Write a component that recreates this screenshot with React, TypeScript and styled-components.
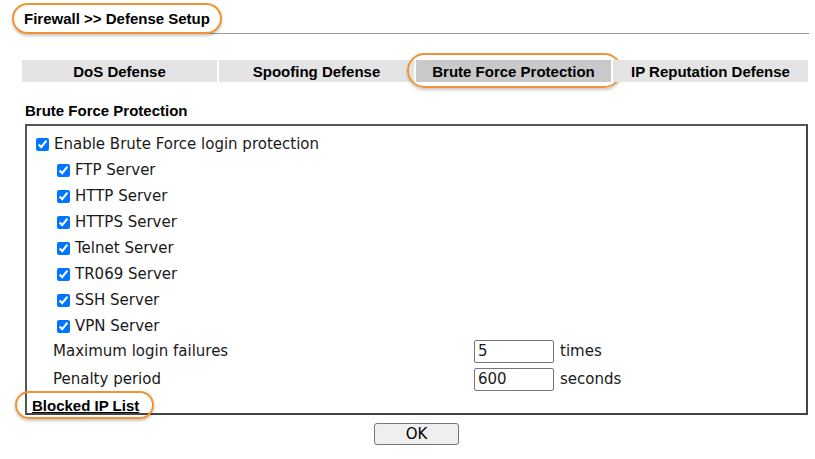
import styled, { createGlobalStyle } from "styled-components";

const GlobalStyle = createGlobalStyle`
  body {
    margin: 0;
    background: #ffffff;
    font-family: "DejaVu Sans", Verdana, sans-serif;
    color: #1a1a1a;
  }
`;

const Page = styled.div`
  width: 815px;
  height: 459px;
  box-sizing: border-box;
  padding: 3px 7px 0 12px;
`;

const Header = styled.div`
  display: flex;
  align-items: flex-end;
`;

const TitleOval = styled.div`
  position: relative;
  z-index: 1;
  height: 31px;
  box-sizing: border-box;
  display: flex;
  align-items: center;
  padding: 0 10px;
  background: #ffffff;
  border: 2px solid #f39234;
  border-radius: 16px;
  box-shadow: 0 2px 3px rgba(0, 0, 0, 0.22);
  font: bold 15px "Liberation Sans", Arial, sans-serif;
  color: #000;
`;

const Rule = styled.div`
  flex: 1;
  margin-left: -14px;
  margin-right: -1px;
  border-bottom: 1px solid #9a9a9a;
`;

const Tabs = styled.div`
  display: grid;
  grid-template-columns: repeat(4, 1fr);
  gap: 2px;
  margin: 26px 0 0 10px;
`;

const Tab = styled.div<{ $active?: boolean }>`
  position: relative;
  height: 22px;
  display: flex;
  align-items: center;
  justify-content: center;
  background: ${(p) => (p.$active ? "#c9c9c9" : "#e4e4e4")};
  font: bold 15px "Liberation Sans", Arial, sans-serif;
  color: #000;
`;

const Annotation = styled.span<{ $inset: string; $radius: number }>`
  position: absolute;
  inset: ${(p) => p.$inset};
  border: 2px solid #f39234;
  border-radius: ${(p) => p.$radius}px;
  box-shadow: 0 2px 3px rgba(0, 0, 0, 0.22);
  pointer-events: none;
`;

const SectionTitle = styled.div`
  margin: 20px 0 0 13px;
  line-height: 18px;
  font: bold 15px "Liberation Sans", Arial, sans-serif;
  color: #000;
`;

const Panel = styled.div`
  margin: 5px 0 0 13px;
  height: 291px;
  box-sizing: border-box;
  border: 2px solid #555555;
  border-right-color: #444;
  border-bottom-color: #444;
  padding-top: 5px;
  font-size: 15px;
`;

const CheckRow = styled.label<{ $indent: number }>`
  display: flex;
  align-items: center;
  gap: 5px;
  height: 26px;
  padding-left: ${(p) => p.$indent}px;
`;

const Check = styled.input`
  margin: 0;
  width: 13px;
  height: 13px;
  accent-color: #0075ff;
`;

const Fields = styled.div`
  margin-top: -2px;
`;

const FieldRow = styled.div`
  display: grid;
  grid-template-columns: 421px 80px auto;
  align-items: center;
  height: 28px;
  padding-left: 26px;
`;

const NumInput = styled.input`
  width: 80px;
  height: 23px;
  box-sizing: border-box;
  margin: 0;
  padding: 0 3px;
  border: 1px solid #767676;
  border-radius: 2px;
  font: 15px "DejaVu Sans", Verdana, sans-serif;
  color: #1a1a1a;
`;

const Unit = styled.span`
  margin-left: 6px;
`;

const LinkRow = styled.div`
  height: 24px;
  display: flex;
  align-items: center;
  padding-left: 5px;
`;

const BlockedLink = styled.a`
  position: relative;
  line-height: 18px;
  font: bold 15px "Liberation Sans", Arial, sans-serif;
  color: #000;
  text-decoration: underline;
  cursor: pointer;
`;

const Actions = styled.div`
  margin: 8px 0 0 13px;
  display: flex;
  justify-content: center;
`;

const OkButton = styled.button`
  width: 85px;
  height: 22px;
  padding: 0;
  background: #efefef;
  border: 1px solid #767676;
  border-radius: 3px;
  font: 15px "DejaVu Sans", Verdana, sans-serif;
  color: #000;
`;

const tabs = [
  "DoS Defense",
  "Spoofing Defense",
  "Brute Force Protection",
  "IP Reputation Defense",
];

const servers = [
  "FTP Server",
  "HTTP Server",
  "HTTPS Server",
  "Telnet Server",
  "TR069 Server",
  "SSH Server",
  "VPN Server",
];

export default function App() {
  return (
    <>
      <GlobalStyle />
      <Page>
        <Header>
          <TitleOval>Firewall &gt;&gt; Defense Setup</TitleOval>
          <Rule />
        </Header>

        <Tabs>
          {tabs.map((t) => (
            <Tab key={t} $active={t === "Brute Force Protection"}>
              {t}
              {t === "Brute Force Protection" && (
                <Annotation $inset="-7px -11px -6px -9px" $radius={18} />
              )}
            </Tab>
          ))}
        </Tabs>

        <SectionTitle>Brute Force Protection</SectionTitle>
        <Panel>
          <CheckRow $indent={9}>
            <Check type="checkbox" defaultChecked />
            Enable Brute Force login protection
          </CheckRow>
          {servers.map((s) => (
            <CheckRow key={s} $indent={30}>
              <Check type="checkbox" defaultChecked />
              {s}
            </CheckRow>
          ))}
          <Fields>
            <FieldRow>
              <span>Maximum login failures</span>
              <NumInput defaultValue="5" />
              <Unit>times</Unit>
            </FieldRow>
            <FieldRow>
              <span>Penalty period</span>
              <NumInput defaultValue="600" />
              <Unit>seconds</Unit>
            </FieldRow>
          </Fields>
          <LinkRow>
            <BlockedLink>
              Blocked IP List
              <Annotation $inset="-6px -15px -5px -17px" $radius={15} />
            </BlockedLink>
          </LinkRow>
        </Panel>
        <Actions>
          <OkButton>OK</OkButton>
        </Actions>
      </Page>
    </>
  );
}
